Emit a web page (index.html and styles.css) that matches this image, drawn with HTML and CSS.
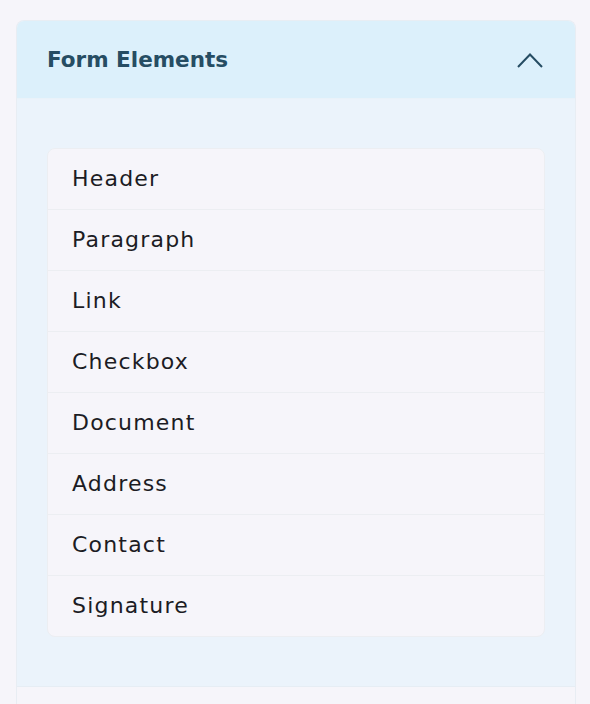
FILE: index.html
```html
<!DOCTYPE html>
<html lang="en">
  <head>
    <meta charset="UTF-8" />
    <meta name="viewport" content="width=device-width, initial-scale=1.0" />
    <title>Form Elements</title>
    <link rel="stylesheet" href="styles.css">
  </head>
  <body>
    <div class="panel">
      <div class="panel-header">
        <h2>Form Elements</h2>
        <svg class="chevron" width="26" height="15" viewBox="0 0 26 15">
          <path d="M1 14 L13 1.5 L25 14" fill="none" stroke="#264d63" stroke-width="2" />
        </svg>
      </div>
      <div class="panel-body">
        <ul class="element-list">
          <li>Header</li>
          <li>Paragraph</li>
          <li>Link</li>
          <li>Checkbox</li>
          <li>Document</li>
          <li>Address</li>
          <li>Contact</li>
          <li>Signature</li>
        </ul>
      </div>
      <div class="panel-next"></div>
    </div>
  </body>
</html>
```

FILE: styles.css
```css
body {
  margin: 0;
  padding: 20px 14px 0 16px;
  background-color: #f6f5fa;
  font-family: "DejaVu Sans", sans-serif;
}
.panel {
  border: 1px solid #e8edf3;
  border-bottom: none;
  border-radius: 8px 8px 0 0;
  overflow: hidden;
}
.panel-header {
  display: flex;
  align-items: center;
  justify-content: space-between;
  height: 77px;
  padding: 0 32px 0 30px;
  background-color: #dcf0fb;
  border-bottom: 1px solid #e9f2f9;
}
.panel-header h2 {
  margin: 0;
  font-size: 21.5px;
  font-weight: 700;
  color: #264d63;
}
.chevron {
  display: block;
  margin-top: 1px;
}
.panel-body {
  padding: 49px 30px 49px 30px;
  background-color: #ebf3fb;
  border-bottom: 1px solid #e6edf4;
}
.element-list {
  list-style: none;
  margin: 0;
  padding: 0;
  background-color: #f6f5fa;
  border: 1px solid #eceef2;
  border-radius: 8px;
}
.element-list li {
  height: 59px;
  display: flex;
  align-items: center;
  padding: 0 0 1px 24px;
  font-size: 22px;
  letter-spacing: 1.2px;
  color: #1c1c24;
  border-bottom: 1px solid #eceef2;
}
.element-list li:last-child {
  border-bottom: none;
}
.panel-next {
  height: 40px;
  background-color: #f6f5fa;
}
```
